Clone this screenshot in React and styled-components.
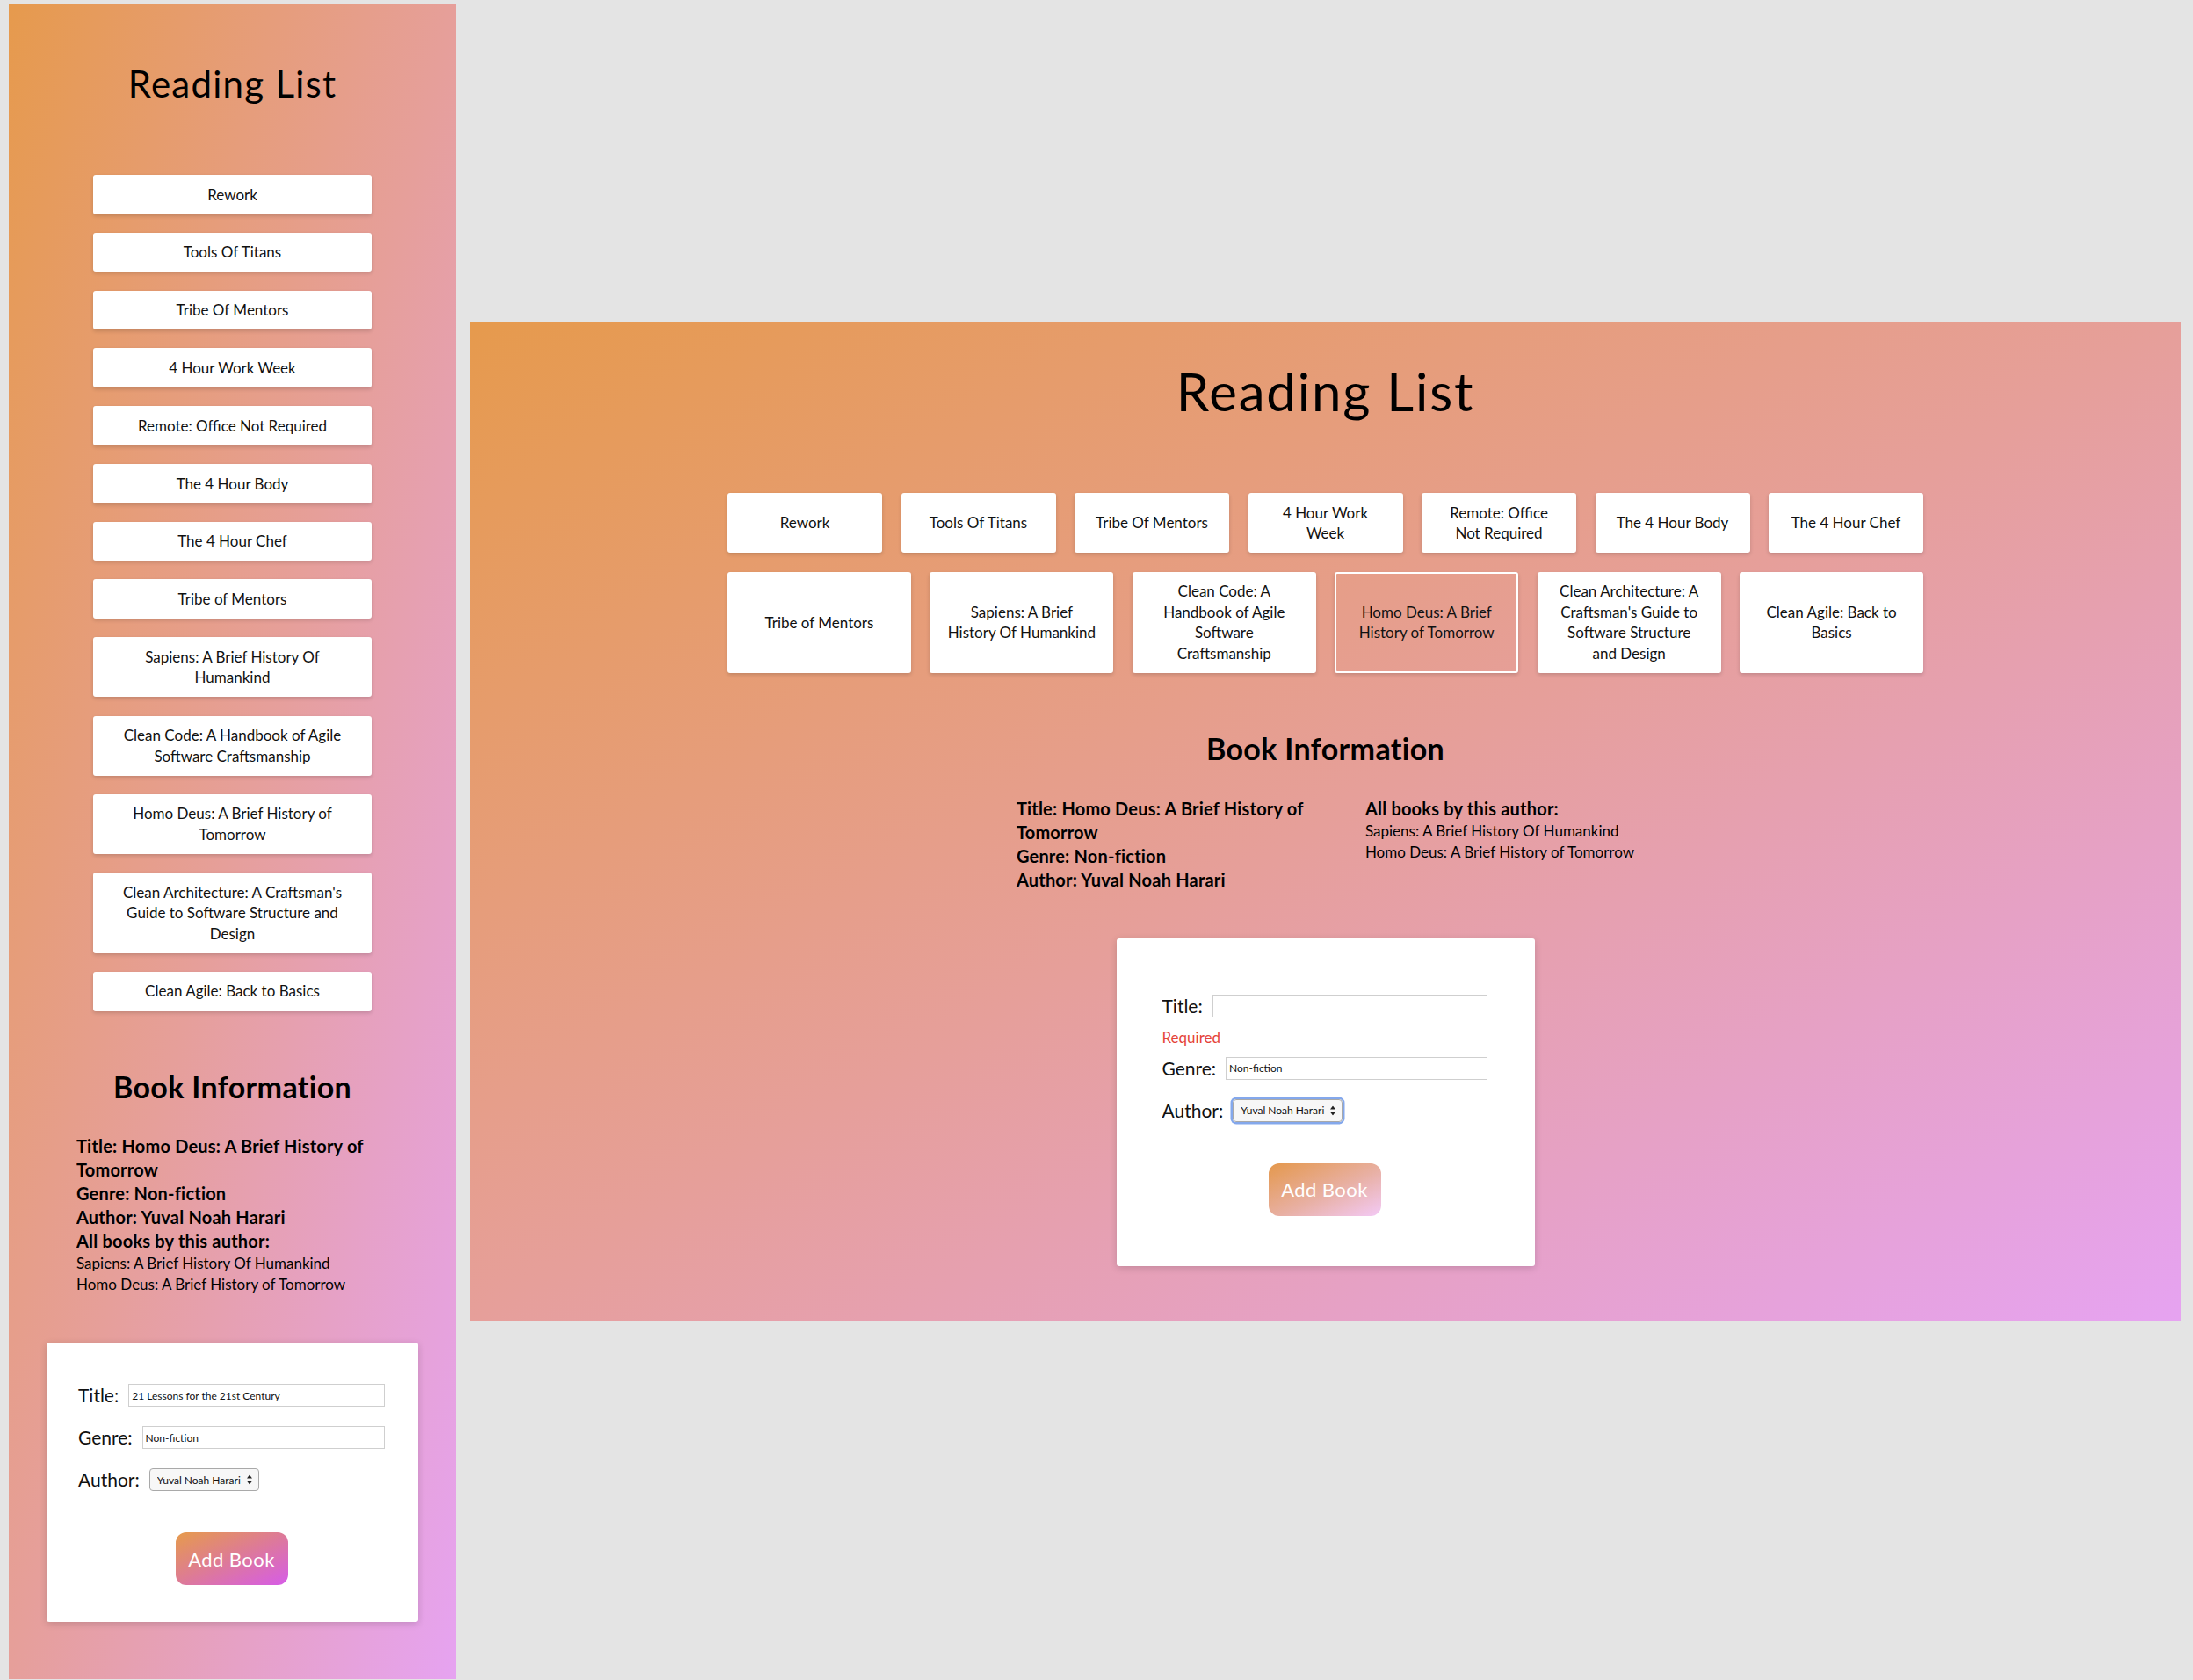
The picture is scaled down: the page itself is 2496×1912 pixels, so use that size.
import React from 'react';
import styled, { createGlobalStyle, css } from 'styled-components';

const FONT = `Lato, "Open Sans", sans-serif`;

const GlobalStyle = createGlobalStyle`
  html, body {
    margin: 0;
    padding: 0;
    background: #e4e4e4;
  }
  body {
    font-family: ${FONT};
    color: #000;
  }
  * {
    box-sizing: border-box;
  }
`;

const books = [
  'Rework',
  'Tools Of Titans',
  'Tribe Of Mentors',
  '4 Hour Work Week',
  'Remote: Office Not Required',
  'The 4 Hour Body',
  'The 4 Hour Chef',
  'Tribe of Mentors',
  'Sapiens: A Brief History Of Humankind',
  'Clean Code: A Handbook of Agile Software Craftsmanship',
  'Homo Deus: A Brief History of Tomorrow',
  "Clean Architecture: A Craftsman's Guide to Software Structure and Design",
  'Clean Agile: Back to Basics',
];

const authorBooks = ['Sapiens: A Brief History Of Humankind', 'Homo Deus: A Brief History of Tomorrow'];

// Page layout
const Stage = styled.div`
  display: flex;
  align-items: flex-start;
  gap: 16px;
  height: 1912px;
  padding: 5px 0 0 10px;
  overflow: hidden;
`;

const Panel = styled.section`
  display: flex;
  flex-direction: column;
  align-items: center;
  flex-shrink: 0;
  background: linear-gradient(to bottom right, #e69a4d 0%, #e69f9a 50%, #e6a3f1 100%);
  ${props => props.$desktop ? css`
    width: 1947px;
    height: 1136px;
    margin-top: 362px;
    padding-top: 42px;
  ` : css`
    width: 509px;
    height: 1906px;
    padding-top: 65px;
  `}
`;

const Title = styled.h1`
  margin: 0;
  font-weight: 400;
  letter-spacing: 0.03em;
  font-size: ${props => props.$desktop ? '60px' : '42px'};
  line-height: ${props => props.$desktop ? '72px' : '50px'};
`;

// Book buttons
const BookList = styled.div`
  display: flex;
  ${props => props.$desktop ? css`
    flex-wrap: wrap;
    width: 1361px;
    gap: 21.7px 21.5px;
    margin-top: 80px;
  ` : css`
    flex-direction: column;
    width: 317px;
    gap: 21.1px;
    margin-top: 79px;
  `}
`;

const BookButton = styled.button`
  display: flex;
  align-items: center;
  justify-content: center;
  font-family: inherit;
  font-size: 17px;
  line-height: 23.5px;
  color: #111;
  text-align: center;
  padding: 8.6px 18px;
  border: 2px solid #fff;
  border-radius: 3px;
  background: ${props => props.$active ? 'transparent' : '#fff'};
  box-shadow: 0 2px 4px rgba(0, 0, 0, 0.16);
  ${props => props.$desktop && css`
    flex: 1 1 160px;
  `}
`;

// Book information
const SectionHeading = styled.h2`
  margin: 66px 0 0;
  font-size: 34px;
  line-height: 40px;
  font-weight: 700;
  letter-spacing: 0.01em;
`;

const InfoBlock = styled.div`
  margin-top: 34.5px;
  ${props => props.$desktop ? css`
    display: flex;
    gap: 37px;
  ` : css`
    width: 355px;
  `}
`;

const InfoColumn = styled.div`
  ${props => props.$wide && css`
    width: 360px;
  `}
`;

const InfoLine = styled.div`
  font-weight: 700;
  font-size: 20px;
  line-height: 27px;
  letter-spacing: 0.01em;
`;

const AuthorBook = styled.div`
  font-size: 17px;
  line-height: 24px;
`;

// Form
const FormCard = styled.form`
  display: flex;
  flex-direction: column;
  background: #fff;
  border-radius: 3px;
  box-shadow: 0 2px 8px rgba(0, 0, 0, 0.16);
  ${props => props.$desktop ? css`
    width: 476px;
    margin-top: 53px;
    padding: 64px 54px 57px 52px;
  ` : css`
    width: 423px;
    margin-top: 54px;
    padding: 47px 38px 42px 36px;
  `}
`;

const FormRow = styled.div`
  display: flex;
  align-items: center;
  height: 26px;
  margin-bottom: 22px;
`;

const Label = styled.label`
  font-size: 21px;
  line-height: 26px;
  color: #111;
  margin-right: 11px;
  white-space: nowrap;
`;

const TextInput = styled.input`
  flex: 1;
  min-width: 0;
  height: 26px;
  border: 1px solid #cfcfcf;
  padding: 0 3px;
  font-family: inherit;
  font-size: 12px;
  color: #111;
  background: #fff;
  outline: none;
`;

const ErrorText = styled.div`
  color: #e5453a;
  font-size: 17px;
  line-height: 23px;
  margin: -10.5px 0 10.5px;
`;

const SelectWrap = styled.div`
  position: relative;
  width: 125px;
  height: 26px;
  border-radius: 4px;
  ${props => props.$focused && css`
    box-shadow: 0 0 0 2.5px #84a8ec;
  `}
`;

const Select = styled.select`
  appearance: none;
  -webkit-appearance: none;
  width: 100%;
  height: 100%;
  border: 1px solid #a9a9a9;
  border-radius: 4px;
  background: #f7f7f7;
  font-family: inherit;
  font-size: 12px;
  color: #111;
  padding: 0 18px 0 8px;
  outline: none;
`;

const Arrows = styled.svg`
  position: absolute;
  right: 8px;
  top: 50%;
  transform: translateY(-50%);
  pointer-events: none;
`;

const AddButton = styled.button`
  align-self: center;
  width: 128px;
  height: 60px;
  margin-top: 25px;
  border: none;
  border-radius: 12px;
  font-family: inherit;
  font-size: 22px;
  letter-spacing: 0.02em;
  color: #fff;
  background: ${props => props.$soft
    ? 'linear-gradient(to bottom right, #e4984c 0%, #e8b0a4 55%, #f3caf6 100%)'
    : 'linear-gradient(to bottom right, #e69b4b 0%, #dd7a98 50%, #d65ce8 100%)'};
`;

const AuthorSelect = ({ focused }) => (
  <SelectWrap $focused={focused}>
    <Select defaultValue="harari">
      <option value="harari">Yuval Noah Harari</option>
    </Select>
    <Arrows width="6" height="11" viewBox="0 0 6 11">
      <path d="M3 0 L6 4 L0 4 Z M0 7 L6 7 L3 11 Z" fill="#222" />
    </Arrows>
  </SelectWrap>
);

const ReadingListView = ({ desktop }) => (
  <Panel $desktop={desktop}>
    <Title $desktop={desktop}>Reading List</Title>

    <BookList $desktop={desktop}>
      {books.map((book, i) => (
        <BookButton key={i} type="button" $desktop={desktop} $active={desktop && i === 10}>
          {book}
        </BookButton>
      ))}
    </BookList>

    <SectionHeading>Book Information</SectionHeading>

    {desktop ? (
      <InfoBlock $desktop>
        <InfoColumn $wide>
          <InfoLine>Title: Homo Deus: A Brief History of Tomorrow</InfoLine>
          <InfoLine>Genre: Non-fiction</InfoLine>
          <InfoLine>Author: Yuval Noah Harari</InfoLine>
        </InfoColumn>
        <InfoColumn>
          <InfoLine>All books by this author:</InfoLine>
          {authorBooks.map(b => <AuthorBook key={b}>{b}</AuthorBook>)}
        </InfoColumn>
      </InfoBlock>
    ) : (
      <InfoBlock>
        <InfoLine>Title: Homo Deus: A Brief History of Tomorrow</InfoLine>
        <InfoLine>Genre: Non-fiction</InfoLine>
        <InfoLine>Author: Yuval Noah Harari</InfoLine>
        <InfoLine>All books by this author:</InfoLine>
        {authorBooks.map(b => <AuthorBook key={b}>{b}</AuthorBook>)}
      </InfoBlock>
    )}

    <FormCard $desktop={desktop} onSubmit={e => e.preventDefault()}>
      <FormRow>
        <Label>Title:</Label>
        <TextInput type="text" defaultValue={desktop ? '' : '21 Lessons for the 21st Century'} />
      </FormRow>
      {desktop && <ErrorText>Required</ErrorText>}
      <FormRow>
        <Label>Genre:</Label>
        <TextInput type="text" defaultValue="Non-fiction" />
      </FormRow>
      <FormRow>
        <Label>Author:</Label>
        <AuthorSelect focused={desktop} />
      </FormRow>
      <AddButton type="submit" $soft={desktop}>Add Book</AddButton>
    </FormCard>
  </Panel>
);

export default function App() {
  return (
    <>
      <GlobalStyle />
      <Stage>
        <ReadingListView />
        <ReadingListView desktop />
      </Stage>
    </>
  );
}
